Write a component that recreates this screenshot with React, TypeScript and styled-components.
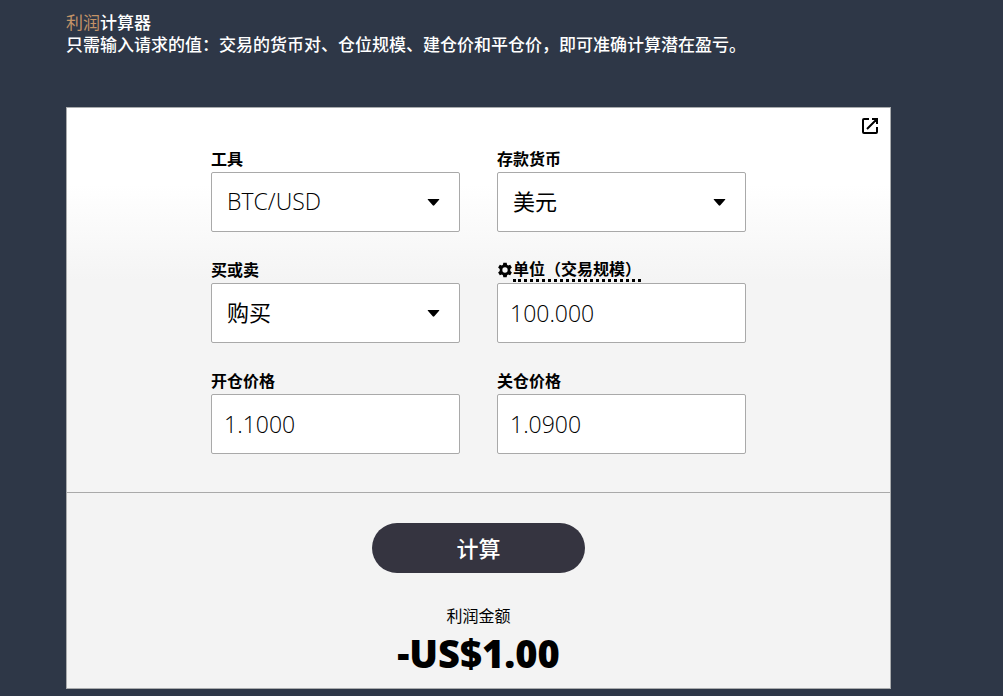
import React, { useState } from "react";
import styled, { createGlobalStyle } from "styled-components";

const GlobalStyle = createGlobalStyle`
  *, *::before, *::after { box-sizing: border-box; }
  body {
    margin: 0;
    background: #2e3747;
    color: #000;
    font-family: "Open Sans", "Noto Sans CJK SC", sans-serif;
  }
`;

const Page = styled.main`
  padding: 12px 112px 7px 66px;
`;

const Intro = styled.header`
  color: #fff;
  font-size: 17px;
  font-weight: 500;
  line-height: 22px;
  padding-bottom: 51px;
`;

const Title = styled.h1`
  margin: 0;
  font: inherit;
`;

const Accent = styled.span`
  color: #c39367;
  font-weight: 400;
`;

const Lead = styled.p`
  margin: 0;
`;

const Card = styled.form`
  position: relative;
  border: 1px solid #a9abad;
  background: #f3f3f3;
`;

const PopOut = styled.a`
  position: absolute;
  top: 8px;
  right: 10px;
  display: flex;
  color: #000;
`;

const Fields = styled.div`
  display: grid;
  grid-template-columns: 1fr 1fr;
  gap: 25px 37px;
  padding: 38px 0 38px;
  width: 65%;
  margin: 0 auto;
`;

const Inputs = styled.section`
  border-bottom: 1px solid #a9a9a9;
  background: linear-gradient(#fff 20%, #f4f4f4 45%);
`;

const FieldBox = styled.div`
  display: flex;
  flex-direction: column;
`;

const Label = styled.label`
  display: flex;
  align-items: center;
  height: 26px;
  padding-bottom: 1px;
  font-size: 16px;
  font-weight: 700;
  line-height: 24px;
`;

const Hint = styled.span`
  height: 25px;
  border-bottom: 3px dotted #000;
`;

const control = `
  width: 100%;
  height: 60px;
  border: 1px solid #a9a9a9;
  border-radius: 2px;
  background: #fff;
  color: #000;
  font-family: inherit;
`;

const TextInput = styled.input`
  ${control}
  padding: 0 12px;
  font-size: 23px;
  font-weight: 350;
`;

const SelectWrap = styled.div`
  display: grid;
  align-items: center;
  & > * { grid-area: 1 / 1; }
`;

const Select = styled.select<{ $latin?: boolean }>`
  ${control}
  appearance: none;
  padding: 0 40px 2px 15px;
  font-size: ${(p) => (p.$latin ? 23 : 22)}px;
  font-weight: ${(p) => (p.$latin ? 350 : 400)};
`;

const Caret = styled.svg`
  justify-self: end;
  margin-right: 20px;
  pointer-events: none;
`;

const Summary = styled.section`
  display: flex;
  flex-direction: column;
  align-items: center;
  padding: 30px 0 9px;
`;

const Submit = styled.button`
  width: 213px;
  height: 50px;
  padding: 0 0 2px;
  border: 0;
  border-radius: 25px;
  background: #353440;
  color: #fff;
  font-family: inherit;
  font-size: 22px;
  font-weight: 500;
  cursor: pointer;
`;

const ResultLabel = styled.div`
  margin-top: 31px;
  font-size: 16px;
  line-height: 24px;
`;

const Result = styled.output`
  font-size: 38px;
  font-weight: 800;
  line-height: 50px;
  padding-bottom: 1px;
`;

const GearIcon = () => (
  <svg width="16" height="16" viewBox="0 0 24 24" fill="currentColor" aria-hidden="true">
    <path
      fillRule="evenodd"
      d="M9.5 1h5l.6 3.2 1.6.9 3.1-1.1 2.5 4.4-2.4 2.1v3l2.4 2.1-2.5 4.4-3.1-1.1-1.6.9-.6 3.2h-5l-.6-3.2-1.6-.9L4.2 20 1.7 15.6l2.4-2.1v-3L1.7 8.4 4.2 4l3.1 1.1 1.6-.9zM12 8a4 4 0 1 0 0 8 4 4 0 0 0 0-8z"
    />
  </svg>
);

type SelectFieldProps = { id: string; label: string; options: string[]; latin?: boolean };

const SelectField = ({ id, label, options, latin }: SelectFieldProps) => (
  <FieldBox>
    <Label htmlFor={id}>{label}</Label>
    <SelectWrap>
      <Select id={id} $latin={latin}>
        {options.map((option) => (
          <option key={option}>{option}</option>
        ))}
      </Select>
      <Caret width="13" height="7" viewBox="0 0 13 7" aria-hidden="true">
        <path d="M1.2 0h10.6q1 0 .3.8L7.3 6.2q-.8.9-1.6 0L.9.8Q.2 0 1.2 0z" />
      </Caret>
    </SelectWrap>
  </FieldBox>
);

type TextFieldProps = { id: string; label: string; initial: string; configurable?: boolean };

const TextField = ({ id, label, initial, configurable }: TextFieldProps) => {
  const [value, setValue] = useState(initial);
  return (
    <FieldBox>
      <Label htmlFor={id}>
        {configurable ? (
          <>
            <GearIcon />
            <Hint>{label}</Hint>
          </>
        ) : (
          label
        )}
      </Label>
      <TextInput id={id} value={value} onChange={(e) => setValue(e.target.value)} />
    </FieldBox>
  );
};

export default function App() {
  return (
    <>
      <GlobalStyle />
      <Page lang="zh-CN">
        <Intro>
          <Title>
            <Accent>利润</Accent>计算器
          </Title>
          <Lead>只需输入请求的值：交易的货币对、仓位规模、建仓价和平仓价，即可准确计算潜在盈亏。</Lead>
        </Intro>
        <Card onSubmit={(e) => e.preventDefault()}>
          <PopOut href="#" aria-label="在新窗口中打开">
            <svg width="20" height="20" viewBox="0 0 20 20" fill="none" stroke="currentColor" strokeWidth="2" aria-hidden="true">
              <path d="M9 3H4q-1 0-1 1v12q0 1 1 1h12q1 0 1-1v-5M12 3h5v5M17 3L7 13" />
            </svg>
          </PopOut>
          <Inputs>
            <Fields>
              <SelectField id="instrument" label="工具" options={["BTC/USD"]} latin />
              <SelectField id="currency" label="存款货币" options={["美元"]} />
              <SelectField id="side" label="买或卖" options={["购买"]} />
              <TextField id="units" label="单位（交易规模）" initial="100.000" configurable />
              <TextField id="open-price" label="开仓价格" initial="1.1000" />
              <TextField id="close-price" label="关仓价格" initial="1.0900" />
            </Fields>
          </Inputs>
          <Summary>
            <Submit type="submit">计算</Submit>
            <ResultLabel>利润金额</ResultLabel>
            <Result>-US$1.00</Result>
          </Summary>
        </Card>
      </Page>
    </>
  );
}
